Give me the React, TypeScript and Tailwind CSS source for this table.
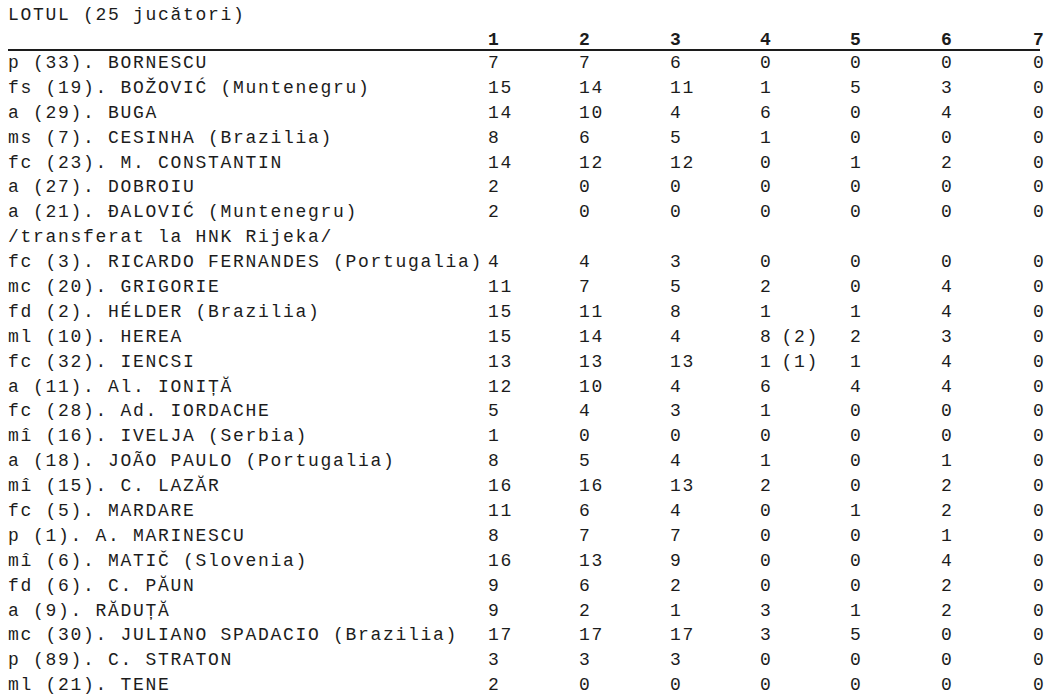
type Row = { name: string; vals: string[]; note?: string };

const rows: Row[] = [
  { name: "p (33). BORNESCU", vals: ["7", "7", "6", "0", "0", "0", "0"] },
  { name: "fs (19). BOŽOVIĆ (Muntenegru)", vals: ["15", "14", "11", "1", "5", "3", "0"] },
  { name: "a (29). BUGA", vals: ["14", "10", "4", "6", "0", "4", "0"] },
  { name: "ms (7). CESINHA (Brazilia)", vals: ["8", "6", "5", "1", "0", "0", "0"] },
  { name: "fc (23). M. CONSTANTIN", vals: ["14", "12", "12", "0", "1", "2", "0"] },
  { name: "a (27). DOBROIU", vals: ["2", "0", "0", "0", "0", "0", "0"] },
  { name: "a (21). ĐALOVIĆ (Muntenegru)", vals: ["2", "0", "0", "0", "0", "0", "0"] },
  { name: "/transferat la HNK Rijeka/", vals: [] },
  { name: "fc (3). RICARDO FERNANDES (Portugalia)", vals: ["4", "4", "3", "0", "0", "0", "0"] },
  { name: "mc (20). GRIGORIE", vals: ["11", "7", "5", "2", "0", "4", "0"] },
  { name: "fd (2). HÉLDER (Brazilia)", vals: ["15", "11", "8", "1", "1", "4", "0"] },
  { name: "ml (10). HEREA", vals: ["15", "14", "4", "8", "2", "3", "0"], note: "(2)" },
  { name: "fc (32). IENCSI", vals: ["13", "13", "13", "1", "1", "4", "0"], note: "(1)" },
  { name: "a (11). Al. IONIȚĂ", vals: ["12", "10", "4", "6", "4", "4", "0"] },
  { name: "fc (28). Ad. IORDACHE", vals: ["5", "4", "3", "1", "0", "0", "0"] },
  { name: "mî (16). IVELJA (Serbia)", vals: ["1", "0", "0", "0", "0", "0", "0"] },
  { name: "a (18). JOÃO PAULO (Portugalia)", vals: ["8", "5", "4", "1", "0", "1", "0"] },
  { name: "mî (15). C. LAZĂR", vals: ["16", "16", "13", "2", "0", "2", "0"] },
  { name: "fc (5). MARDARE", vals: ["11", "6", "4", "0", "1", "2", "0"] },
  { name: "p (1). A. MARINESCU", vals: ["8", "7", "7", "0", "0", "1", "0"] },
  { name: "mî (6). MATIČ (Slovenia)", vals: ["16", "13", "9", "0", "0", "4", "0"] },
  { name: "fd (6). C. PĂUN", vals: ["9", "6", "2", "0", "0", "2", "0"] },
  { name: "a (9). RĂDUȚĂ", vals: ["9", "2", "1", "3", "1", "2", "0"] },
  { name: "mc (30). JULIANO SPADACIO (Brazilia)", vals: ["17", "17", "17", "3", "5", "0", "0"] },
  { name: "p (89). C. STRATON", vals: ["3", "3", "3", "0", "0", "0", "0"] },
  { name: "ml (21). TENE", vals: ["2", "0", "0", "0", "0", "0", "0"] },
];

const cols = "grid w-[1032px] grid-cols-[480px_91px_91px_90px_90px_91px_92px_7px]";

export default function App() {
  return (
    <div
      className="w-[1050px] h-[700px] overflow-hidden bg-white pl-2 pt-[3px] text-[#1c1c1c] text-[18px] tracking-[1.7px]"
      style={{ fontFamily: '"Liberation Mono", "DejaVu Sans Mono", monospace' }}
    >
      <div className="h-[25px] leading-[25px] whitespace-pre">LOTUL (25 jucători)</div>

      <div className={`${cols} h-[23px] leading-[25px] border-b-2 border-[#1c1c1c] font-bold`}>
        <div />
        {["1", "2", "3", "4", "5", "6", "7"].map((h) => (
          <div key={h} className="whitespace-nowrap">
            {h}
          </div>
        ))}
      </div>

      {rows.map((r) => (
        <div key={r.name} className={`${cols} h-[24.9px] leading-[24.9px]`}>
          <div className="whitespace-pre">{r.name}</div>
          {r.vals.map((v, i) => (
            <div key={i} className="whitespace-pre">
              {v}
              {i === 3 && r.note && <span className="ml-[9px]">{r.note}</span>}
            </div>
          ))}
        </div>
      ))}
    </div>
  );
}
